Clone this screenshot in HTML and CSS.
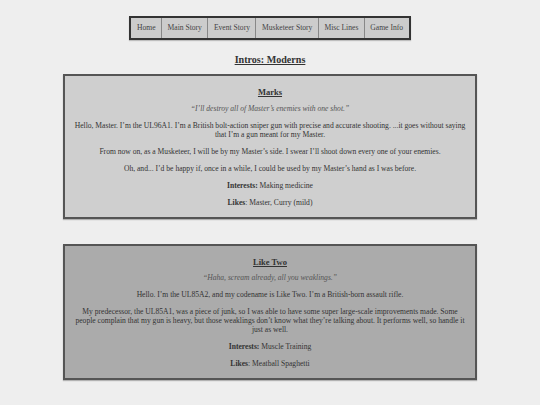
FILE: index.html
```html
<!DOCTYPE html>
<html>
<head>
<meta charset="utf-8">
<link rel="stylesheet" href="styles.css">
</head>
<body>
<nav class="nav">
  <a class="nav-item">Home</a>
  <a class="nav-item">Main Story</a>
  <a class="nav-item">Event Story</a>
  <a class="nav-item">Musketeer Story</a>
  <a class="nav-item">Misc Lines</a>
  <a class="nav-item">Game Info</a>
</nav>
<h1 class="page-title">Intros: Moderns</h1>
<section class="card card-light">
  <h2 class="card-title">Marks</h2>
  <p class="quote">“I’ll destroy all of Master’s enemies with one shot.”</p>
  <p>Hello, Master. I’m the UL96A1. I’m a British bolt-action sniper gun with precise and accurate shooting. ...it goes without saying that I’m a gun meant for my Master.</p>
  <p>From now on, as a Musketeer, I will be by my Master’s side. I swear I’ll shoot down every one of your enemies.</p>
  <p>Oh, and... I’d be happy if, once in a while, I could be used by my Master’s hand as I was before.</p>
  <p><b>Interests:</b> Making medicine</p>
  <p><b>Likes</b>: Master, Curry (mild)</p>
</section>
<section class="card card-dark">
  <h2 class="card-title">Like Two</h2>
  <p class="quote">“Haha, scream already, all you weaklings.”</p>
  <p>Hello. I’m the UL85A2, and my codename is Like Two. I’m a British-born assault rifle.</p>
  <p>My predecessor, the UL85A1, was a piece of junk, so I was able to have some super large-scale improvements made. Some people complain that my gun is heavy, but those weaklings don’t know what they’re talking about. It performs well, so handle it just as well.</p>
  <p><b>Interests:</b> Muscle Training</p>
  <p><b>Likes</b>: Meatball Spaghetti</p>
</section>
</body>
</html>
```
FILE: styles.css
```css
html, body {
  margin: 0;
  padding: 0;
  background: #eeeeee;
}
body {
  font-family: "Liberation Serif", "Times New Roman", serif;
  color: #333;
  padding-top: 16px;
}
.nav {
  display: flex;
  width: max-content;
  margin: 0 auto;
  border: 2px solid #333;
  background: #cccccc;
  box-shadow: 0 1px 1px rgba(0,0,0,0.2);
}
.nav-item {
  font-size: 7.6px;
  line-height: 20px;
  padding: 0 5.5px;
  color: #444;
  border-left: 1px solid #888;
}
.nav-item:first-child {
  border-left: none;
}
.page-title {
  font-size: 10.1px;
  font-weight: bold;
  text-decoration: underline;
  text-align: center;
  line-height: 14px;
  margin: 13px 0 7px;
  color: #333;
}
.card {
  box-sizing: border-box;
  width: 414px;
  margin: 0 auto 25px;
  border: 2px solid #555;
  box-shadow: 0 1px 1px rgba(0,0,0,0.25);
  padding: 11px 8px 2px;
  text-align: center;
  font-size: 7.6px;
  line-height: 9px;
}
.card-light {
  background: #cfcfcf;
}
.card-dark {
  background: #ababab;
}
.card-title {
  font-size: 8.5px;
  font-weight: bold;
  text-decoration: underline;
  line-height: 10px;
  margin: 0 0 6.5px;
  color: #333;
}
.card p {
  margin: 0 0 8px;
}
.card .quote {
  font-style: italic;
  color: #555;
}
.card b {
  color: #333;
}
```
